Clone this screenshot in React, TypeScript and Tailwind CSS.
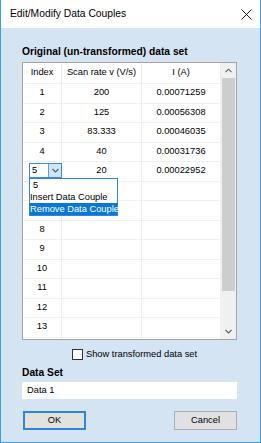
import React from "react";

type Row = { index: string; rate: string; current: string };

const rows: Row[] = [
    { index: '1', rate: '200', current: '0.00071259' },
    { index: '2', rate: '125', current: '0.00056308' },
    { index: '3', rate: '83.333', current: '0.00046035' },
    { index: '4', rate: '40', current: '0.00031736' },
    { index: '5', rate: '20', current: '0.00022952' },
    { index: '6', rate: '', current: '' },
    { index: '7', rate: '', current: '' },
    { index: '8', rate: '', current: '' },
    { index: '9', rate: '', current: '' },
    { index: '10', rate: '', current: '' },
    { index: '11', rate: '', current: '' },
    { index: '12', rate: '', current: '' },
    { index: '13', rate: '', current: '' },
    // partly scrolled in, only its top edge shows
    { index: '', rate: '', current: '' },
];

const Chevron: React.FC<{ up?: boolean }> = ({ up }) => (
    <svg width="7" height="5" viewBox="0 0 7 5" fill="none" stroke="#5f5f5f" strokeWidth="1.1">
        <path d={up ? "M0.5 4.2L3.5 1.2L6.5 4.2" : "M0.5 1L3.5 4L6.5 1"} />
    </svg>
);

const ComboCell: React.FC = () => (
    <div className="relative ml-[6px] mt-px flex h-[15px] w-[33px] border border-[#3d8ad6] bg-white">
        <span className="flex-1 pl-[2px] leading-[13px]">5</span>
        <div className="flex w-[13px] items-center justify-center border-l border-[#5aa0e2] bg-[#cfe5f8]">
            <Chevron />
        </div>
        {/* open dropdown list */}
        <div className="absolute left-[-1px] top-[14px] z-10 flex w-[89px] flex-col border border-[#2f86d8] bg-white">
            <span className="h-[12px] pl-[3px] leading-[12px]">5</span>
            <span className="h-[12px] whitespace-nowrap leading-[12px]">Insert Data Couple</span>
            <span className="h-[12px] whitespace-nowrap bg-[#0a78d8] leading-[12px] text-white">Remove Data Couple</span>
        </div>
    </div>
);

const App: React.FC = () => {
    return (
        <div
            className="flex h-[443px] w-[261px] flex-col border-x border-b border-[#3c9ee8] bg-[#d5e4f3] text-[9.3px] text-black"
            style={{ fontFamily: '"Liberation Sans", Arial, sans-serif' }}
        >
            {/* title bar */}
            <div className="flex h-[28px] items-center justify-between bg-white pl-[9px] pr-[8px]">
                <span className="text-[10.3px]">Edit/Modify Data Couples</span>
                <svg width="11" height="11" viewBox="0 0 11 11" stroke="#1a1a1a" strokeWidth="1">
                    <path d="M0.5 0.5L10.5 10.5M10.5 0.5L0.5 10.5" />
                </svg>
            </div>

            <div className="flex flex-col pl-[21px] pt-[18px]">
                <h3 className="mb-[4px] h-[12px] text-[10.25px] font-bold leading-[12px]">Original (un-transformed) data set</h3>

                {/* data grid */}
                <div className="flex h-[278px] w-[215px] border border-[#a3a3a3] bg-white">
                    <div className="flex w-[198px] flex-col overflow-hidden">
                        <div className="flex h-[21px] shrink-0 items-center border-b border-[#f0f0f0]">
                            <div className="flex h-full w-[39px] items-center justify-center border-r border-[#ececec]">Index</div>
                            <div className="flex h-full w-[80px] items-center justify-center border-r border-[#ececec]">Scan rate v (V/s)</div>
                            <div className="flex h-full w-[79px] items-center justify-center border-r border-[#ececec]">I (A)</div>
                        </div>
                        {rows.map((row, i) => (
                            <div key={i} className="flex h-[19.5px] shrink-0 border-b border-[#f0f0f0]">
                                {row.index === '5' ? (
                                    <div className="w-[39px] border-r border-[#f0f0f0]">
                                        <ComboCell />
                                    </div>
                                ) : (
                                    <div className="flex w-[39px] items-center justify-center border-r border-[#f0f0f0]">{row.index}</div>
                                )}
                                <div className="flex w-[80px] items-center justify-center border-r border-[#f0f0f0]">{row.rate}</div>
                                <div className="flex w-[79px] items-center justify-center border-r border-[#f0f0f0]">{row.current}</div>
                            </div>
                        ))}
                    </div>
                    {/* scrollbar */}
                    <div className="flex w-[15px] flex-col bg-[#f0f0f0]">
                        <div className="flex h-[15px] items-center justify-center">
                            <Chevron up />
                        </div>
                        <div className="mx-px h-[213px] bg-[#cdcdcd]" />
                        <div className="flex-1" />
                        <div className="flex h-[15px] items-center justify-center">
                            <Chevron />
                        </div>
                    </div>
                </div>

                <label className="ml-[50px] mt-[9px] flex h-[11px] items-center">
                    <span className="h-[11px] w-[11px] border border-[#333333] bg-white" />
                    <span className="ml-[3px]">Show transformed data set</span>
                </label>

                <h3 className="mt-[7px] h-[12px] text-[10.25px] font-bold leading-[12px]">Data Set</h3>
                <div className="mt-[3px] flex h-[17px] w-[215px] items-center bg-white pl-[5px]">Data 1</div>

                <div className="mt-[12px] flex w-[215px] justify-between">
                    <button className="ml-px h-[19px] w-[63px] border-2 border-[#2f86d8] bg-[#e1e1e1]">OK</button>
                    <button className="h-[19px] w-[63px] border border-[#adadad] bg-[#e1e1e1]">Cancel</button>
                </div>
            </div>
        </div>
    );
};

export default App;
